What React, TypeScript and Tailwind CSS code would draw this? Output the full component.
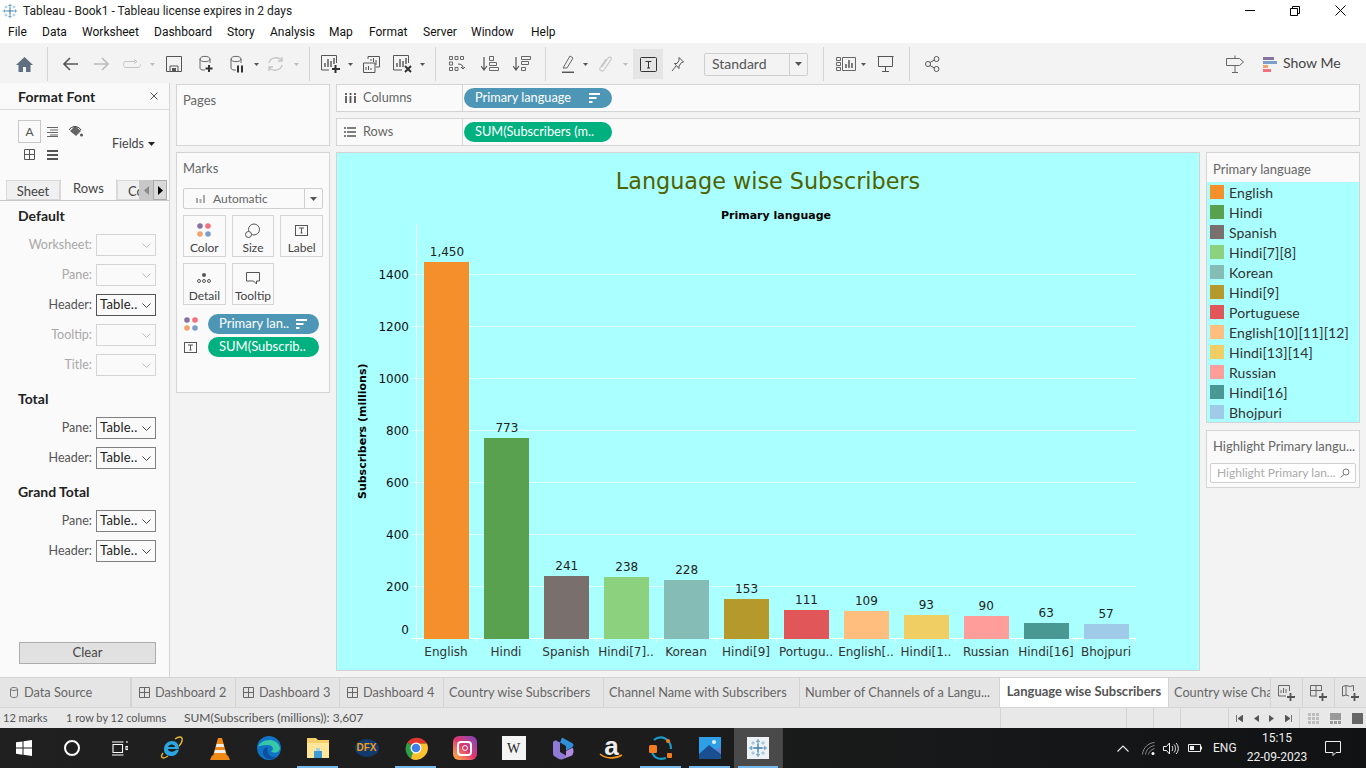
import React from "react";

const languages = [
  { name: "English", axis: "English", value: 1450, color: "bg-[#f58f2c]" },
  { name: "Hindi", axis: "Hindi", value: 773, color: "bg-[#59a14f]" },
  { name: "Spanish", axis: "Spanish", value: 241, color: "bg-[#796f6c]" },
  { name: "Hindi[7][8]", axis: "Hindi[7]..", value: 238, color: "bg-[#8cd17d]" },
  { name: "Korean", axis: "Korean", value: 228, color: "bg-[#86bcb6]" },
  { name: "Hindi[9]", axis: "Hindi[9]", value: 153, color: "bg-[#b6992d]" },
  { name: "Portuguese", axis: "Portugu..", value: 111, color: "bg-[#e15759]" },
  { name: "English[10][11][12]", axis: "English[..", value: 109, color: "bg-[#ffbe7d]" },
  { name: "Hindi[13][14]", axis: "Hindi[1..", value: 93, color: "bg-[#f1ce63]" },
  { name: "Russian", axis: "Russian", value: 90, color: "bg-[#ff9d9a]" },
  { name: "Hindi[16]", axis: "Hindi[16]", value: 63, color: "bg-[#499894]" },
  { name: "Bhojpuri", axis: "Bhojpuri", value: 57, color: "bg-[#a0cbe8]" },
];

const SCALE = 0.26;
const ticks = [1400, 1200, 1000, 800, 600, 400, 200];
const menus = [
  ["File", "w-[34px]"],
  ["Data", "w-[40px]"],
  ["Worksheet", "w-[72px]"],
  ["Dashboard", "w-[73px]"],
  ["Story", "w-[43px]"],
  ["Analysis", "w-[59px]"],
  ["Map", "w-[40px]"],
  ["Format", "w-[54px]"],
  ["Server", "w-[48px]"],
  ["Window", "w-[60px]"],
  ["Help", "w-[40px]"],
];

function Ico({ w, h, vb, className, children }: { w: number; h: number; vb?: string; className?: string; children: React.ReactNode }) {
  return (
    <svg width={w} height={h} viewBox={vb ?? `0 0 ${w} ${h}`} className={`shrink-0 ${className ?? ""}`} fill="none">
      {children}
    </svg>
  );
}

function Caret({ className, dim }: { className?: string; dim?: boolean }) {
  return (
    <Ico w={5} h={3} className={className}>
      <path d="M0 0h5L2.500 3z" fill={dim ? "#bdbdbd" : "#555"} />
    </Ico>
  );
}

function Sep({ className }: { className: string }) {
  return <div className={`w-px h-[34px] bg-[#d4d4d4] shrink-0 ${className}`} />;
}

function Datasource({ badge }: { badge: "plus" | "pause" }) {
  return (
    <Ico w={14} h={18} className="ml-[17px]">
      <path d="M1 4v9c0 1.200 1.500 2 3 2h2M11 4v4M1 4c0-3.500 10-3.500 10 0S1 7.500 1 4z" stroke="#666" />
      {badge === "plus" ? (
        <path d="M10 10v7M6.500 13.500h7" stroke="#333" strokeWidth="2" />
      ) : (
        <path d="M8 10.500v7M12 10.500v7" stroke="#333" strokeWidth="2" />
      )}
    </Ico>
  );
}

function Toolbar() {
  return (
    <div className="h-[40px] bg-[#f3f3f3] flex items-center shrink-0 pt-[2px]">
      <Ico w={17} h={15} className="ml-[16px]">
        <path d="M8.500 0L0 8h2.500v7h4.500v-5h3v5h4.500V8H17z" fill="#5f6f80" />
      </Ico>
      <Sep className="ml-[14px]" />
      <Ico w={16} h={14} className="ml-[14px]">
        <path d="M16 7H2M8 1L2 7l6 6" stroke="#555" strokeWidth="1.600" />
      </Ico>
      <Ico w={16} h={14} className="ml-[16px]">
        <path d="M0 7h14M8 1l6 6-6 6" stroke="#bbb" strokeWidth="1.600" />
      </Ico>
      <Ico w={18} h={10} className="ml-[13px]">
        <path d="M12 2.500H3C1 2.500.5 4 .5 5.500S1 8.500 3 8.500h12c2 0 2.500-1.500 2.500-3M11 .5l3 2-3 2" stroke="#c4c4c4" />
      </Ico>
      <Caret dim className="ml-[9px]" />
      <Ico w={16} h={16} className="ml-[11px]">
        <path d="M.5.5h15v15H.5zM4 15.500V10h8v5.500" stroke="#555" />
        <path d="M6 12h4v3H6z" fill="#555" />
      </Ico>
      <Datasource badge="plus" />
      <Datasource badge="pause" />
      <Caret className="ml-[10px]" />
      <Ico w={17} h={16} className="ml-[8px]">
        <path d="M2 7c1-6 10-7 13-2M15 9c-1 6-10 7-13 2M15 1v4h-4M2 15v-4h4" stroke="#c4c4c4" strokeWidth="1.400" />
      </Ico>
      <Caret dim className="ml-[10px]" />
      <Sep className="ml-[10px]" />
      <Ico w={19} h={18} className="ml-[11px]">
        <path d="M8 15H.5V.5h15V8" stroke="#555" />
        <path d="M4 12V8M7 12V4M10 12V6M13 9V3" stroke="#555" strokeWidth="1.400" />
        <path d="M14.500 10v8M11 14h8" stroke="#333" strokeWidth="2" />
      </Ico>
      <Caret className="ml-[8px]" />
      <Ico w={17} h={17} className="ml-[10px]">
        <path d="M5 3V.5h11.500V11H13M.5 7H12v9.500H.5z" stroke="#555" />
        <path d="M8 5V3M10.500 6V2M13 9V4M3 14v-3M5.500 14v-4M8 14v-2" stroke="#555" />
      </Ico>
      <Ico w={19} h={18} className="ml-[13px]">
        <path d="M9 15H.5V.5h15V8" stroke="#555" />
        <path d="M4 12V8M7 12V4M10 12V6M13 9V3" stroke="#555" strokeWidth="1.400" />
        <path d="M12 11l6 6M18 11l-6 6" stroke="#333" strokeWidth="2" />
      </Ico>
      <Caret className="ml-[8px]" />
      <Sep className="ml-[10px]" />
      <Ico w={17} h={16} className="ml-[13px]">
        <path d="M.5.5h3v3h-3zM6 .5h3v3H6zM11.500.5h3v3h-3zM.5 6h3v3h-3zM.5 11.500h3v3h-3zM6 11.500h3v3H6z" stroke="#666" />
        <path d="M9 8c3 0 5 1 5 4M12 11l2 2 2-2" stroke="#555" />
      </Ico>
      <SortIcon asc className="ml-[15px]" />
      <SortIcon className="ml-[14px]" />
      <Sep className="ml-[14px]" />
      <Ico w={12} h={18} className="ml-[16px]">
        <path d="M1 13L8 1l3 2-6 10-4 0z" stroke="#666" />
        <path d="M0 17.300h12" stroke="#555" strokeWidth="1.500" />
      </Ico>
      <Caret className="ml-[9px]" />
      <Ico w={13} h={16} className="ml-[11px]">
        <path d="M3 11l6-9c1.500-2 4-.5 3 1.500L5 14c-1.500 2-5 .5-4-2l6-9" stroke="#c8c8c8" strokeWidth="1.200" />
      </Ico>
      <Caret dim className="ml-[11px]" />
      <div className="w-[30px] h-[30px] bg-[#e5e5e5] ml-[5px] flex items-center justify-center shrink-0">
        <Ico w={17} h={15}>
          <rect x=".5" y=".5" width="16" height="14" rx="1" stroke="#333" />
          <path d="M5.500 4.500h6M8.500 4.500v6.500M7 11h3" stroke="#333" />
        </Ico>
      </div>
      <Ico w={13} h={15} className="ml-[8px]">
        <path d="M8 .5l4.500 4.500-2 .5-2.500 3.500v2.500L3.500 6.500h2.500L8 3.500zM5 9l-4 5" stroke="#555" />
      </Ico>
      <div className="w-[104px] h-[23px] ml-[20px] border border-[#cfcfcf] rounded-[2px] flex items-center shrink-0 text-[14px] text-[#555]">
        <span className="pl-[7px] pb-[2px] flex-1">Standard</span>
        <div className="w-[18px] h-full border-l border-[#cfcfcf] flex items-center justify-center">
          <Ico w={7} h={4}>
            <path d="M0 0h7L3.500 4z" fill="#555" />
          </Ico>
        </div>
      </div>
      <Sep className="ml-[15px]" />
      <Ico w={20} h={14} className="ml-[12px]">
        <path d="M.5.5h4v3h-4zM.5 5.500h4v3h-4zM.5 10.500h4v3h-4zM6.500.5h13v13h-13z" stroke="#666" />
        <path d="M10 11V7M13 11V3M16 11V6" stroke="#555" strokeWidth="1.500" />
      </Ico>
      <Caret className="ml-[5px]" />
      <Ico w={17} h={16} className="ml-[11px]">
        <path d="M.5.5h16M1.500.5v10h14V.5M8.500 10.500v5M5 15.500h7" stroke="#555" />
      </Ico>
      <Sep className="ml-[15px]" />
      <Ico w={15} h={16} className="ml-[15px]">
        <circle cx="3" cy="8" r="2.500" stroke="#555" />
        <circle cx="11.500" cy="3" r="2.500" stroke="#555" />
        <circle cx="11.500" cy="13" r="2.500" stroke="#555" />
        <path d="M5 6.500l4.500-2.500M5 9.500l4.500 2.500" stroke="#555" />
      </Ico>
      <Ico w={18} h={18} className="ml-auto">
        <path d="M.5 3.500h13l4 3.500-4 3.500H.5zM9 .5v3M9 10.500v7M6 17.500h6" stroke="#666" />
      </Ico>
      <Ico w={14} h={15} className="ml-[19px]">
        <path d="M0 0h11v3H0z" fill="#86739e" />
        <path d="M0 4h14v3H0z" fill="#7d9ec9" />
        <path d="M0 8h5v3H0z" fill="#f2a26b" />
        <path d="M0 12h8v3H0z" fill="#f5707f" />
      </Ico>
      <span className="ml-[6px] mr-[28px] text-[14px] text-[#444] w-[55px] whitespace-nowrap pb-[4px]">Show Me</span>
    </div>
  );
}

function SortIcon({ asc, className }: { asc?: boolean; className?: string }) {
  return (
    <Ico w={18} h={16} className={className}>
      <path d="M3 1v12M0 10l3 4 3-4" stroke="#555" strokeWidth="1.200" />
      {asc ? (
        <path d="M8.500.5h4v4h-4zM8.500 6.500h7v3h-7zM8.500 11.500h9v3h-9z" stroke="#666" />
      ) : (
        <path d="M8.500.5h9v3h-9zM8.500 5.500h7v3h-7zM8.500 11.500h4v3h-4z" stroke="#666" />
      )}
    </Ico>
  );
}

function Dots() {
  return (
    <Ico w={14} h={14}>
      <circle cx="3" cy="3" r="2.800" fill="#86739e" />
      <circle cx="11" cy="3" r="2.800" fill="#f5707f" />
      <circle cx="3" cy="11" r="2.800" fill="#f2a26b" />
      <circle cx="11" cy="11" r="2.800" fill="#7d9ec9" />
    </Ico>
  );
}

function TBox() {
  return (
    <Ico w={13} h={11}>
      <rect x=".5" y=".5" width="12" height="10" stroke="#555" />
      <path d="M4 3h5M6.500 3v5M5.500 8h2" stroke="#555" />
    </Ico>
  );
}

function SortBars() {
  return (
    <Ico w={11} h={10}>
      <path d="M0 0h11v2H0zM0 4h7.500v2H0zM0 8h3.500v2H0z" fill="#fff" />
    </Ico>
  );
}

function FormatRow({ label, value, active, dark }: { label: string; value?: string; active?: boolean; dark?: boolean }) {
  return (
    <div className="flex items-center h-[22px]">
      <span className={`w-[92px] text-right text-[12.5px] ${active ? "text-[#555]" : "text-[#a8a8a8]"}`}>{label}</span>
      <div className={`ml-[4px] w-[60px] h-[22px] border flex items-center ${dark ? "border-[#555]" : active ? "border-[#808080]" : "border-[#d4d4d4]"}`}>
        <span className="pl-[3px] flex-1 text-[13px] text-[#222] tracking-[0.2px]">{value ?? ""}</span>
        <Ico w={9} h={5} className="mr-[4px]">
          <path d="M.5.5l4 4 4-4" stroke={active ? "#444" : "#bbb"} />
        </Ico>
      </div>
    </div>
  );
}

function FormatPane() {
  return (
    <div className="w-[170px] shrink-0 bg-[#fafafa] border-r border-[#d4d4d4] flex flex-col h-full">
      <div className="h-[27px] border-b border-[#d9d9d9] flex items-center justify-between pl-[18px] pr-[11px] shrink-0">
        <span className="text-[14px] font-bold text-[#222] tracking-[0.1px]">Format Font</span>
        <Ico w={8} h={8}>
          <path d="M.5.5l7 7M7.500.5l-7 7" stroke="#555" />
        </Ico>
      </div>
      <div className="relative h-[69px] shrink-0">
        <div className="flex items-center pl-[18px] pt-[10px]">
          <div className="w-[23px] h-[23px] border border-[#c8c8c8] flex items-center justify-center text-[12px] text-[#555]">A</div>
          <Ico w={11} h={10} className="ml-[6px]">
            <path d="M0 .5h11M3 3h8M0 5.500h11M3 8h8M0 9.500h11" stroke="#666" />
          </Ico>
          <Ico w={14} h={13} className="ml-[11px]">
            <path d="M1 6l5-5 6 5-5 5z" fill="#666" />
            <path d="M0 5c2-4 9-5 12 0" stroke="#333" />
            <circle cx="12.500" cy="10" r="1.500" fill="#555" />
          </Ico>
        </div>
        <div className="flex items-center pl-[24px] pt-[6px]">
          <Ico w={11} h={11}>
            <path d="M.5.5h10v10H.5zM5.500.5v10M.5 5.500h10" stroke="#555" />
          </Ico>
          <Ico w={11} h={10} className="ml-[12px]">
            <path d="M0 0h11v2H0zM0 4h11v2H0zM0 8h11v2H0z" fill="#555" />
          </Ico>
        </div>
        <div className="absolute left-[112px] top-[25px] flex items-center gap-[4px] text-[12.5px] text-[#444]">
          Fields
          <Ico w={7} h={4}>
            <path d="M0 0h7L3.500 4z" fill="#222" />
          </Ico>
        </div>
      </div>
      <div className="relative h-[22px] shrink-0 border-b border-[#c8c8c8] overflow-hidden">
        <div className="flex items-end h-full pl-[6px] text-[13px] text-[#444]">
          <div className="w-[54px] h-[20px] bg-[#f0f0f0] border border-[#d9d9d9] text-center leading-[20px]">Sheet</div>
          <div className="w-[57px] h-[22px] bg-[#fafafa] border border-b-0 border-[#d9d9d9] text-center leading-[19px]">Rows</div>
          <div className="w-[50px] h-[20px] bg-[#f0f0f0] border border-[#d9d9d9] pl-[10px] leading-[20px] whitespace-nowrap overflow-hidden">Columns</div>
        </div>
        <div className="absolute left-[139px] top-[1px] flex">
          <div className="w-[14px] h-[20px] bg-[#c8c8c8] flex items-center justify-center">
            <Ico w={5} h={9}>
              <path d="M5 0v9L0 4.500z" fill="#8a8a8a" />
            </Ico>
          </div>
          <div className="w-[14px] h-[20px] bg-[#d9d9d9] border border-[#aaa] flex items-center justify-center">
            <Ico w={5} h={9}>
              <path d="M0 0v9l5-4.500z" fill="#000" />
            </Ico>
          </div>
        </div>
      </div>
      <h3 className="pl-[18px] mt-[6px] h-[18px] text-[14px] font-bold text-[#222] leading-[18px]">Default</h3>
      <div className="flex flex-col gap-[8px] mt-[9px]">
        <FormatRow label="Worksheet:" />
        <FormatRow label="Pane:" />
        <FormatRow label="Header:" value="Table.." active dark />
        <FormatRow label="Tooltip:" />
        <FormatRow label="Title:" />
      </div>
      <h3 className="pl-[18px] mt-[14px] h-[18px] text-[14px] font-bold text-[#222] leading-[18px]">Total</h3>
      <div className="flex flex-col gap-[8px] mt-[9px]">
        <FormatRow label="Pane:" value="Table.." active />
        <FormatRow label="Header:" value="Table.." active />
      </div>
      <h3 className="pl-[18px] mt-[14px] h-[18px] text-[14px] font-bold text-[#222] leading-[18px]">Grand Total</h3>
      <div className="flex flex-col gap-[8px] mt-[9px]">
        <FormatRow label="Pane:" value="Table.." active />
        <FormatRow label="Header:" value="Table.." active />
      </div>
      <div className="mt-auto mb-[13px] ml-[19px] w-[137px] h-[22px] bg-[#e1e1e1] border border-[#adadad] flex items-center justify-center text-[13px] text-[#444]">
        Clear
      </div>
    </div>
  );
}

function MarkCard({ label, children }: { label: string; children?: React.ReactNode }) {
  return (
    <div className="w-full h-[42px] border border-[#d4d4d4] flex flex-col items-center justify-between pt-[6px] pb-[1px]">
      <div className="h-[16px] flex items-center">{children}</div>
      <span className="text-[12px] leading-[14px] text-[#444]">{label}</span>
    </div>
  );
}

function MarksCard() {
  return (
    <div className="h-[241px] bg-[#fafafa] border border-[#d4d4d4] flex flex-col shrink-0 px-[6px]">
      <span className="text-[13px] text-[#666] mt-[7px] leading-[16px]">Marks</span>
      <div className="mt-[12px] h-[21px] border border-[#cfcfcf] rounded-[2px] flex items-center text-[12px] text-[#666]">
        <Ico w={9} h={9} className="ml-[12px]">
          <path d="M1 9V4M4.500 9V5M8 9V1" stroke="#aaa" strokeWidth="2" />
        </Ico>
        <span className="ml-[8px] flex-1">Automatic</span>
        <div className="w-[18px] h-full border-l border-[#cfcfcf] flex items-center justify-center">
          <Ico w={7} h={4}>
            <path d="M0 0h7L3.500 4z" fill="#555" />
          </Ico>
        </div>
      </div>
      <div className="mt-[6px] grid grid-cols-3 gap-x-[6px] gap-y-[6px] w-[140px]">
        <MarkCard label="Color">
          <Dots />
        </MarkCard>
        <MarkCard label="Size">
          <Ico w={15} h={15}>
            <circle cx="9" cy="6.500" r="5.500" stroke="#555" />
            <circle cx="3.500" cy="11.500" r="3" fill="#fafafa" stroke="#555" />
          </Ico>
        </MarkCard>
        <MarkCard label="Label">
          <TBox />
        </MarkCard>
        <MarkCard label="Detail">
          <Ico w={14} h={10}>
            <circle cx="7" cy="2" r="2" fill="#555" />
            <circle cx="2" cy="8" r="1.500" stroke="#555" />
            <circle cx="7" cy="8" r="1.500" stroke="#555" />
            <circle cx="12" cy="8" r="1.500" stroke="#555" />
          </Ico>
        </MarkCard>
        <MarkCard label="Tooltip">
          <Ico w={14} h={13}>
            <path d="M.5.5h13v8.500h-3v3l-3-3H.5z" stroke="#555" />
          </Ico>
        </MarkCard>
      </div>
      <div className="mt-[9px] flex items-center">
        <div className="w-[25px] pl-[1px]">
          <Dots />
        </div>
        <div className="w-[111px] h-[20px] rounded-full bg-[#4e96b5] text-white text-[13px] flex items-center justify-between pl-[11px] pr-[12px] whitespace-nowrap">
          <span>Primary lan..</span>
          <SortBars />
        </div>
      </div>
      <div className="mt-[3px] flex items-center">
        <div className="w-[25px] pl-[1px]">
          <TBox />
        </div>
        <div className="w-[111px] h-[20px] rounded-full bg-[#00b180] text-white text-[13px] flex items-center pl-[11px] whitespace-nowrap">
          <span>SUM(Subscrib..</span>
        </div>
      </div>
    </div>
  );
}

function Shelf({ label, icon, pill, color, sort }: { label: string; icon: React.ReactNode; pill: string; color: string; sort?: boolean }) {
  return (
    <div className="h-[28px] bg-[#fafafa] border border-[#d4d4d4] flex items-center">
      <div className="w-[6px]" />
      <div className="w-[14px] flex justify-center">{icon}</div>
      <span className="w-[105px] pl-[6px] text-[12.75px] text-[#666]">{label}</span>
      <div className="w-px h-full bg-[#d4d4d4]" />
      <div className={`ml-[1px] w-[148px] h-[20px] rounded-full ${color} text-white text-[12.75px] flex items-center justify-between pl-[11px] pr-[12px] whitespace-nowrap`}>
        <span>{pill}</span>
        {sort && <SortBars />}
      </div>
    </div>
  );
}

function Chart() {
  return (
    <div className="flex-1 h-[519px] bg-[#aaffff] border border-[#d4d4d4] flex flex-col font-['DejaVu_Sans',sans-serif] min-w-0">
      <div className="h-[55px] shrink-0 flex items-center justify-center pt-[3px] text-[22.3px] text-[#4f6200]">Language wise Subscribers</div>
      <div className="flex flex-1">
        <div className="w-[79px] shrink-0 flex flex-col items-end">
          <div className="h-[41px]" />
          <div className="relative w-full flex flex-col items-end pr-[7px] text-[12px] text-[#111]">
            {ticks.map((t) => (
              <div key={t} className="h-[52px] flex items-center">
                {t}
              </div>
            ))}
            <div className="h-[33px] flex items-center">0</div>
            <span className="absolute left-[-42px] top-[174px] w-[136px] text-center -rotate-90 text-[11px] font-bold text-black whitespace-nowrap">
              Subscribers (millions)
            </span>
          </div>
        </div>
        <div className="w-[720px] flex flex-col">
          <div className="h-[16px] flex items-center justify-center text-[11px] font-bold text-black">Primary language</div>
          <div className="relative h-[415px] border-l border-white/90 flex items-end">
            {ticks.map((t) => (
              <div key={t} className="absolute left-[-6px] right-0 h-px bg-white/60" style={{ bottom: t * SCALE }} />
            ))}
            <div className="absolute left-[-6px] right-0 bottom-0 h-px bg-white" />
            <div className="absolute right-0 bottom-[-3px] w-px h-[3px] bg-white" />
            {languages.map((l) => (
              <div key={l.name} className="relative w-[60px] flex flex-col items-center">
                <span className="text-[12px] leading-[14px] mb-[3px] text-[#222]">{l.value.toLocaleString("en-US")}</span>
                <div className={`w-[45px] ${l.color}`} style={{ height: l.value * SCALE }} />
                <div className="absolute left-[-1px] bottom-[-3px] w-px h-[3px] bg-white" />
              </div>
            ))}
          </div>
          <div className="flex mt-[3px]">
            {languages.map((l) => (
              <div key={l.name} className="w-[60px] text-center text-[12px] leading-[20px] text-[#333] whitespace-nowrap">
                {l.axis}
              </div>
            ))}
          </div>
        </div>
      </div>
    </div>
  );
}

function Legend() {
  return (
    <div className="w-[154px] shrink-0 flex flex-col gap-[7px]">
      <div className="h-[271px] border border-[#d4d4d4] bg-[#aaffff] flex flex-col">
        <div className="h-[29px] bg-[#fafafa] pl-[6px] pt-[4px] flex items-center text-[13px] text-[#666]">Primary language</div>
        <div className="pl-[3px] flex flex-col">
          {languages.map((l) => (
            <div key={l.name} className="h-[20px] flex items-center">
              <div className={`w-[14px] h-[14px] ${l.color}`} />
              <span className="ml-[5px] text-[14px] text-[#333] tracking-[0.1px] whitespace-nowrap">{l.name}</span>
            </div>
          ))}
        </div>
      </div>
      <div className="h-[58px] border border-[#d4d4d4] bg-[#fafafa] flex flex-col px-[3px]">
        <span className="mt-[7px] pl-[3px] text-[13px] leading-[16px] text-[#666] whitespace-nowrap">Highlight Primary langu...</span>
        <div className="mt-[9px] h-[20px] bg-white border border-[#cfcfcf] rounded-[2px] flex items-center justify-between pl-[6px] pr-[5px] text-[12px] text-[#aaa]">
          Highlight Primary lan...
          <Ico w={10} h={10}>
            <circle cx="6" cy="4" r="3" stroke="#777" />
            <path d="M4 6.500L.5 9.500" stroke="#777" />
          </Ico>
        </div>
      </div>
    </div>
  );
}

const tabs = [
  ["Dashboard 2", "w-[104px]", true],
  ["Dashboard 3", "w-[104px]", true],
  ["Dashboard 4", "w-[104px]", true],
  ["Country wise Subscribers", "w-[160px]", false],
  ["Channel Name with Subscribers", "w-[196px]", false],
  ["Number of Channels of a Langu...", "w-[200px]", false],
] as const;

function SheetAdd({ kind }: { kind: "ws" | "db" | "story" }) {
  return (
    <div className="w-[32px] h-full border-l border-[#d4d4d4] flex items-center justify-center shrink-0">
      <Ico w={17} h={16}>
        {kind === "ws" && <path d="M8 11H.5V.5h11V6M3 8V5M5.500 8V3M8 8V4" stroke="#666" />}
        {kind === "db" && <path d="M7 11H.5V.5h11V6M6 .5v10M.5 5.500h11" stroke="#666" />}
        {kind === "story" && <path d="M7 11l-3-1-3.500 1V1.500L4 .5l4 1 3.500-1V6M4 .5V10" stroke="#666" />}
        <path d="M12.500 8v8M9 12h8" stroke="#555" strokeWidth="1.800" />
      </Ico>
    </div>
  );
}

function TabBar() {
  return (
    <div className="h-[31px] bg-[#e5e5e5] border-y border-[#d4d4d4] flex text-[12.75px] text-[#666] shrink-0 overflow-hidden">
      <div className="w-[132px] border-r-2 border-[#d4d4d4] flex items-center pl-[10px] shrink-0">
        <Ico w={8} h={11}>
          <path d="M.5 2v7c0 2 7 2 7 0V2C7.500 0 .5 0 .5 2zM.5 2c0 2 7 2 7 0" stroke="#777" />
        </Ico>
        <span className="ml-[6px]">Data Source</span>
      </div>
      {tabs.map(([name, w, icon]) => (
        <div key={name} className={`${w} border-r border-[#d4d4d4] flex items-center shrink-0 whitespace-nowrap ${icon ? "pl-[7px]" : "pl-[5px]"}`}>
          {icon && (
            <Ico w={11} h={11} className="mr-[5px]">
              <path d="M.5.5h10v10H.5zM5.500.5v10M.5 5.500h10" stroke="#666" />
            </Ico>
          )}
          {name}
        </div>
      ))}
      <div className="w-[169px] bg-white border-r border-[#d4d4d4] flex items-center justify-center shrink-0 font-bold text-[13px] text-[#555] pb-[2px]">
        Language wise Subscribers
      </div>
      <div className="w-[101px] flex items-center pl-[5px] shrink-0 whitespace-nowrap overflow-hidden">Country wise Channels</div>
      <SheetAdd kind="ws" />
      <SheetAdd kind="db" />
      <SheetAdd kind="story" />
    </div>
  );
}

function StatusBar() {
  return (
    <div className="h-[20px] bg-[#e8e8e8] flex items-center text-[12px] text-[#555] shrink-0">
      <span className="w-[66px] pl-[3px] text-[11px]">12 marks</span>
      <span className="w-[118px] text-[11px]">1 row by 12 columns</span>
      <span className="w-[816px]">SUM(Subscribers (millions)): 3,607</span>
      <div className="w-[126px] h-full border-l border-[#d4d4d4]" />
      <div className="w-[27px] h-full border-l border-[#d4d4d4]" />
      <div className="w-[27px] h-full border-l border-[#d4d4d4]" />
      <div className="w-[48px] h-full border-l border-[#d4d4d4]" />
      <div className="w-[71px] h-full border-l border-[#d4d4d4] flex items-center justify-between px-[7px]">
        <Ico w={7} h={7}>
          <path d="M.5 0v7M7 0v7L2 3.500z" stroke="#555" fill="#555" strokeWidth=".8" />
        </Ico>
        <Ico w={5} h={7}>
          <path d="M5 0v7L0 3.500z" fill="#555" />
        </Ico>
        <Ico w={5} h={7}>
          <path d="M0 0v7l5-3.500z" fill="#555" />
        </Ico>
        <Ico w={7} h={7}>
          <path d="M6.500 0v7M0 0v7l5-3.500z" stroke="#555" fill="#555" strokeWidth=".8" />
        </Ico>
      </div>
      <div className="flex-1 h-full border-l border-[#d4d4d4] flex items-center gap-[11px] pl-[8px]">
        <Ico w={11} h={11}>
          <path d="M0 0h3v3H0zM4 0h3v3H4zM8 0h3v3H8zM0 4h3v3H0zM4 4h3v3H4zM8 4h3v3H8zM0 8h3v3H0zM4 8h3v3H4zM8 8h3v3H8z" fill="#bcbcbc" />
        </Ico>
        <Ico w={11} h={11}>
          <path d="M0 0h11v7H0zM0 8h3v3H0zM4 8h3v3H4zM8 8h3v3H8z" fill="#9a9a9a" />
        </Ico>
        <div className="w-[11px] h-[11px] bg-[#666]" />
      </div>
    </div>
  );
}

function TableauMark({ size }: { size: number }) {
  return (
    <svg width={size} height={size} viewBox="0 0 22 22" className="shrink-0" fill="none">
      <path d="M11 6v10M6 11h10" stroke="#3f7fa6" strokeWidth="1.500" />
      <path d="M11 1v5M8.800 3.500h4.400M11 16v5M8.800 18.500h4.400M1 11h5M3.500 8.800v4.400M16 11h5M18.500 8.800v4.400" stroke="#5a9cc0" strokeWidth="1.200" />
      <path d="M5.500 3.500v4M3.500 5.500h4M16.500 3.500v4M14.500 5.500h4M5.500 14.500v4M3.500 16.500h4M16.500 14.500v4M14.500 16.500h4" stroke="#94bed6" strokeWidth="1.200" />
    </svg>
  );
}

function Slot({ children, on, hover, w = "w-[49px]" }: { children: React.ReactNode; on?: boolean; hover?: boolean; w?: string }) {
  return (
    <div className={`relative ${w} h-full flex items-center justify-center shrink-0 ${hover ? "bg-[#4a4a4a]" : ""}`}>
      {children}
      {on && <div className="absolute left-[4px] right-[4px] bottom-0 h-[2px] bg-[#76b9ed]" />}
    </div>
  );
}

function Taskbar() {
  return (
    <div className="h-[40px] bg-gradient-to-r from-[#202020] via-[#1c1c1c] to-[#101214] flex items-center text-white shrink-0 overflow-hidden font-['Roboto',sans-serif]">
      <Slot w="w-[48px]">
        <Ico w={16} h={16}>
          <path d="M0 2.300L6.500 1.400v6.200H0zM7.500 1.300L16 0v7.600H7.500zM0 8.500h6.500v6.200L0 13.800zM7.500 8.500H16V16l-8.500-1.200z" fill="#fff" />
        </Ico>
      </Slot>
      <Slot w="w-[48px]">
        <div className="w-[16px] h-[16px] rounded-full border-[2px] border-white" />
      </Slot>
      <Slot w="w-[48px]">
        <Ico w={16} h={15}>
          <path d="M1 3.500h9.500v8H1zM0 1h11.500M0 14h11.500M14 1h2M14 5.500h2v3h-2z" stroke="#fff" strokeWidth="1.100" />
        </Ico>
      </Slot>
      <div className="w-[2px]" />
      <Slot>
        <Ico w={24} h={24}>
          <path d="M5 13.500C5 8 9 5 13 5c4.500 0 7 3 7 8H9c.3 3 5 4 8 .7h3C18 19 15 20 12.500 20 8 20 5 17.500 5 13.500zM9 11h7c-.3-3.500-6-3.500-7 0z" fill="#2aa6e0" />
          <path d="M4 17C1 21 3 24 9 20M16 3c4-3 8-3 7 2-.4 2-2 4-3 5" stroke="#e9b92c" strokeWidth="1.400" />
        </Ico>
      </Slot>
      <Slot>
        <Ico w={20} h={23}>
          <path d="M8 1h4l5 18H3z" fill="#f08a14" />
          <path d="M6.600 7h6.800l.8 3H5.800zM5 13h10l.8 3H4.200z" fill="#eee" />
          <path d="M2 18.500h16l2 4.500H0z" fill="#f08a14" />
        </Ico>
      </Slot>
      <Slot>
        <Ico w={24} h={24}>
          <circle cx="12" cy="12" r="12" fill="#1173c5" />
          <path d="M1 11C3 3 20 0 23 12c0 5-7 6-9 3 3 0 3-6-3-6-5 0-10 1-10 2z" fill="#36c6a8" />
          <path d="M13 23c-7 0-9-8-5-11 2-1 3 0 3 0-2 3 1 9 6 9 2 0 2 1-4 2z" fill="#0b4f9e" />
        </Ico>
      </Slot>
      <Slot on>
        <Ico w={22} h={20}>
          <path d="M0 0h9l2 2h11v18H0z" fill="#f5cf6a" />
          <path d="M0 5h22v15H0z" fill="#fde59a" />
          <path d="M7 20v-7h8v7z" fill="#3f9bd8" />
          <path d="M9 13V10h4v3z" fill="#9ad2f0" />
        </Ico>
      </Slot>
      <Slot>
        <div className="relative w-[24px] h-[18px] flex items-center justify-center">
          <div className="absolute inset-0 rounded-[50%] bg-[#123a6a]" />
          <span className="relative text-[10px] font-black text-[#f09a1c] leading-none font-['Liberation_Sans',sans-serif]">DFX</span>
        </div>
      </Slot>
      <Slot on>
        <Ico w={24} h={24}>
          <path d="M12 12L3.300 6.500A11.900 11.900 0 0 1 23 7.500H12z" fill="#e0382e" />
          <path d="M12 12L7 22.700A11.900 11.900 0 0 1 3.300 6.500z" fill="#2e9f45" />
          <path d="M12 7.500h11A11.900 11.900 0 0 1 7 22.700z" fill="#fbc02d" />
          <circle cx="12" cy="12" r="5.500" fill="#fff" />
          <circle cx="12" cy="12" r="4.300" fill="#3f7fe8" />
        </Ico>
      </Slot>
      <Slot>
        <div className="w-[24px] h-[24px] rounded-[6px] bg-gradient-to-tr from-[#fdb32c] via-[#e1306c] to-[#7a3ac0] flex items-center justify-center">
          <div className="w-[15px] h-[15px] rounded-[4px] border-[2px] border-white flex items-center justify-center">
            <div className="w-[6px] h-[6px] rounded-full border-[1.5px] border-white" />
          </div>
        </div>
      </Slot>
      <Slot>
        <div className="w-[24px] h-[24px] bg-[#f4f4f4] flex items-center justify-center text-[14px] text-[#222] font-['Liberation_Serif',serif]">W</div>
      </Slot>
      <Slot>
        <Ico w={22} h={23}>
          <path d="M10 .5l10 5.500c2 1 2 3 0 4.500l-6 3V9L8 5.500z" fill="#2f8fd8" />
          <path d="M1 6c0-2 2-3 4-2l3 1.500V15l6 3.500-3 3.500c-1.500 1-3 .5-5-.5l-4-2.500C1 18 1 17 1 15z" fill="#8f7ad6" />
          <path d="M14 14l6-3c2-1 2 6 0 7.500L11 22c1-2 3-3 3-4z" fill="#b48ae0" />
        </Ico>
      </Slot>
      <Slot>
        <div className="relative w-[26px] h-[24px] flex justify-center">
          <span className="text-[26px] leading-[20px] font-bold text-[#eee] font-['Liberation_Sans',sans-serif]">a</span>
          <Ico w={25} h={7} className="absolute left-0 bottom-0">
            <path d="M1 1c6 5 16 5 22 1" stroke="#f39a1e" strokeWidth="1.600" />
          </Ico>
        </div>
      </Slot>
      <Slot on>
        <Ico w={24} h={24}>
          <path d="M5 4C12-2 22 3 22 13M17 22C10 24 5 22 3 16" stroke="#1a9bc7" strokeWidth="2.200" />
          <rect x="0" y="9" width="8" height="8" rx="1.500" fill="#f47c20" />
          <rect x="18" y="17" width="5" height="5" rx="1" fill="#f47c20" />
          <circle cx="19" cy="5" r="2" fill="#f47c20" />
        </Ico>
      </Slot>
      <Slot on>
        <Ico w={22} h={22}>
          <path d="M0 0h22v22H0z" fill="#2f9fe8" />
          <path d="M0 22v-5L10 8l12 9v5z" fill="#1a4f92" />
          <path d="M10 8l6 5 6-3v7z" fill="#5d7fd0" />
          <circle cx="15" cy="5" r="2" fill="#e8f4fc" />
        </Ico>
      </Slot>
      <Slot on hover w="w-[48px]">
        <div className="w-[22px] h-[22px] bg-[#eef2f5] flex items-center justify-center">
          <TableauMark size={20} />
        </div>
      </Slot>
      <div className="w-px h-full bg-[#444]" />
      <div className="ml-auto flex items-center h-full">
        <Ico w={12} h={7}>
          <path d="M.5 6.500L6 1l5.500 5.500" stroke="#eee" strokeWidth="1.100" />
        </Ico>
        <Ico w={13} h={13} className="ml-[13px]">
          <path d="M.5 12.500C1 6 6 1 12.500.5M3.500 12.500c.5-4.500 4-8 9-9M6.500 12.500c.5-2.500 2-4.500 6-6" stroke="#888" />
          <circle cx="11" cy="11.500" r="1.500" fill="#fff" />
        </Ico>
        <Ico w={16} h={13} className="ml-[8px]">
          <path d="M.5 4.500h3l3-3.500v11l-3-3.500h-3z" stroke="#eee" />
          <path d="M9 4c1 1.500 1 3.500 0 5M11 2.500c2 2 2 6 0 8M13 1c3 3 3 8 0 11" stroke="#eee" />
        </Ico>
        <Ico w={15} h={8} className="ml-[9px]">
          <path d="M.5.5h12v7H.5zM13.500 2.500v3" stroke="#eee" />
          <path d="M2 2h4v4H2z" fill="#eee" />
        </Ico>
        <span className="ml-[10px] w-[29px] text-[12px] text-[#eee]">ENG</span>
        <div className="w-[70px] flex flex-col items-center text-[12px] leading-[19px] text-[#eee]">
          <span>15:15</span>
          <span>22-09-2023</span>
        </div>
        <Ico w={16} h={16} className="ml-[13px]">
          <path d="M.5 1.500h15v11H11l-3 3v-3H.5z" stroke="#eee" />
        </Ico>
        <div className="w-[25px]" />
      </div>
    </div>
  );
}

export default function App() {
  return (
    <div className="w-[1366px] h-[768px] overflow-hidden flex flex-col bg-white font-['Lato',sans-serif]">
      <div className="h-[21px] flex items-center shrink-0 font-['Roboto',sans-serif] text-[12px] text-[#222]">
        <div className="w-[23px] pl-[2px]">
          <TableauMark size={16} />
        </div>
        <span>Tableau - Book1 - Tableau license expires in 2 days</span>
        <div className="ml-auto flex items-center">
          <Ico w={10} h={1} className="mr-[35px]">
            <path d="M0 .5h10" stroke="#000" />
          </Ico>
          <Ico w={10} h={10} className="mr-[35px]">
            <path d="M.5 2.500h7v7h-7zM2.500 2.500v-2h7v7h-2" stroke="#000" />
          </Ico>
          <Ico w={11} h={11} className="mr-[20px]">
            <path d="M.5.5l10 10M10.500.5l-10 10" stroke="#000" />
          </Ico>
        </div>
      </div>
      <div className="h-[22px] flex items-center pl-[8px] shrink-0 font-['Roboto',sans-serif] text-[12px] text-[#111]">
        {menus.map(([m, w]) => (
          <span key={m} className={w}>
            {m}
          </span>
        ))}
      </div>
      <Toolbar />
      <div className="flex h-[594px] bg-[#f3f3f3] shrink-0">
        <FormatPane />
        <div className="w-[6px] shrink-0" />
        <div className="w-[154px] shrink-0 flex flex-col pt-[1px] gap-[6px]">
          <div className="h-[62px] bg-[#fafafa] border border-[#d4d4d4] px-[6px] pt-[6px] text-[13px] text-[#666] shrink-0">Pages</div>
          <MarksCard />
        </div>
        <div className="w-[6px] shrink-0" />
        <div className="w-[1024px] shrink-0 flex flex-col pt-[1px] gap-[6px]">
          <Shelf
            label="Columns"
            pill="Primary language"
            color="bg-[#4e96b5]"
            sort
            icon={
              <Ico w={11} h={10}>
                <path d="M1 0v2M1 3v7M5.500 0v2M5.500 3v7M10 0v2M10 3v7" stroke="#555" strokeWidth="1.800" />
              </Ico>
            }
          />
          <Shelf
            label="Rows"
            pill="SUM(Subscribers (m.."
            color="bg-[#00b180]"
            icon={
              <Ico w={12} h={10}>
                <path d="M0 1h2M3 1h9M0 5h2M3 5h9M0 9h2M3 9h9" stroke="#555" strokeWidth="1.600" />
              </Ico>
            }
          />
          <div className="flex gap-[6px]">
            <Chart />
            <Legend />
          </div>
        </div>
      </div>
      <TabBar />
      <StatusBar />
      <Taskbar />
    </div>
  );
}
